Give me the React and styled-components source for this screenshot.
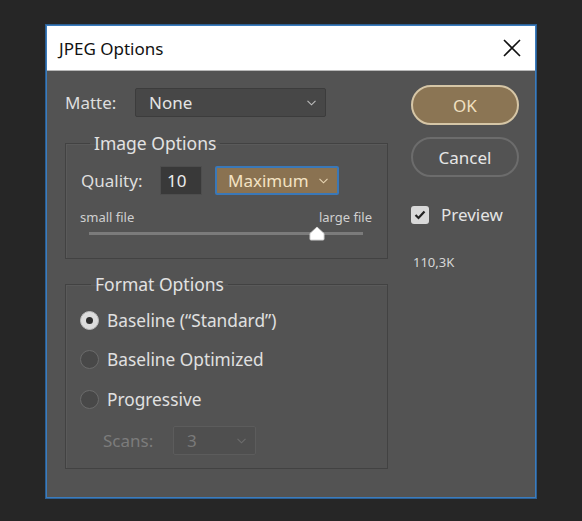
import React from "react";
import styled, { createGlobalStyle, css } from "styled-components";

const GlobalStyle = createGlobalStyle`
  html, body {
    margin: 0;
    background: #262626;
  }

  body {
    font-family: "Noto Sans", "Open Sans", sans-serif;
    color: #dedede;
  }
`;

const Page = styled.div`
  width: 582px;
  height: 521px;
  padding: 25px 0 0 46px;
  box-sizing: border-box;
`;

const Dialog = styled.div`
  width: 490px;
  height: 473px;
  box-sizing: border-box;
  border: 1px solid #3b7cbd;
  background: #535353;
  display: flex;
  flex-direction: column;
  box-shadow: 0 0 0 1px #2c5f93;
`;

const TitleBar = styled.div`
  height: 44px;
  flex-shrink: 0;
  background: #ffffff;
  border-bottom: 1px solid #b8b8b8;
  display: flex;
  align-items: center;
  justify-content: space-between;
  padding: 0 12px 0 12px;
`;

const Title = styled.h1`
  margin: 0;
  font-size: 17px;
  font-weight: 400;
  color: #111;
`;

const CloseButton = styled.button`
  width: 22px;
  height: 22px;
  padding: 0;
  border: 0;
  background: transparent;
  display: flex;
  align-items: center;
  justify-content: center;
  cursor: pointer;
`;

const Body = styled.div`
  display: flex;
  padding-left: 18px;
`;

const LeftCol = styled.div`
  width: 323px;
  margin-top: 17px;
  display: flex;
  flex-direction: column;
`;

const RightCol = styled.div`
  width: 108px;
  margin-left: 23px;
  margin-top: 14px;
  display: flex;
  flex-direction: column;
`;

const Row = styled.div`
  display: flex;
  align-items: center;
  height: ${(p) => p.$h || 29}px;
  padding-left: ${(p) => p.$indent || 0}px;
`;

const Label = styled.span`
  font-size: 17px;
  color: ${(p) => (p.$disabled ? "#7c7c7c" : "#dedede")};
  width: ${(p) => (p.$w ? `${p.$w}px` : "auto")};
  flex-shrink: 0;
`;

const Select = styled.div`
  box-sizing: border-box;
  width: ${(p) => p.$w}px;
  height: 29px;
  border-radius: 2px;
  display: flex;
  align-items: center;
  justify-content: space-between;
  padding: 0 9px 0 13px;
  font-size: 17px;
  background: #474747;
  border: 1px solid #3c3c3c;
  color: #e4e4e4;

  ${(p) =>
    p.$accent &&
    css`
      background: #8a7251;
      border: 2px solid #3a78b8;
      color: #f3e2c3;
      padding-left: 11px;
    `}

  ${(p) =>
    p.$disabled &&
    css`
      background: #4f4f4f;
      border: 1px solid #5c5c5c;
      color: #7a7a7a;
    `}
`;

const NumberBox = styled.div`
  box-sizing: border-box;
  width: 42px;
  height: 29px;
  margin: 0 13px 0 0;
  background: #393939;
  border: 1px solid #4d4d4d;
  display: flex;
  align-items: center;
  padding-left: 6px;
  font-size: 17px;
  color: #ececec;
`;

const Group = styled.fieldset`
  margin: ${(p) => p.$top}px 0 0 0;
  padding: 0 15px ${(p) => p.$bottom}px 14px;
  border: 1px solid #424242;
  box-shadow: inset 1px 1px 0 #5a5a5a;
  min-width: 0;
`;

const Legend = styled.legend`
  margin-left: ${(p) => p.$offset || 10}px;
  padding: 0 4px;
  font-size: 17.5px;
  line-height: 22px;
  color: #e2e2e2;
`;

const FileLabels = styled.div`
  display: flex;
  justify-content: space-between;
  font-size: 13px;
  line-height: 16px;
  color: #d0d0d0;
  margin-top: 14px;
`;

const Slider = styled.div`
  position: relative;
  height: 16px;
  margin: 0 9px 0 9px;
`;

const Track = styled.div`
  position: absolute;
  left: 0;
  right: 0;
  top: 7px;
  height: 3px;
  background: #7b7b7b;
`;

const Thumb = styled.svg`
  position: absolute;
  top: 1px;
  transform: translateX(-50%);
`;

const RadioRow = styled.label`
  display: flex;
  align-items: center;
  height: 24px;
  margin-top: ${(p) => p.$top}px;
  font-size: 17.3px;
  color: #e0e0e0;
  gap: 8px;
`;

const RadioDot = styled.span`
  box-sizing: border-box;
  width: 19px;
  height: 19px;
  border-radius: 50%;
  display: flex;
  align-items: center;
  justify-content: center;
  background: ${(p) => (p.$on ? "#dcdcdc" : "#484848")};
  border: 1px solid ${(p) => (p.$on ? "#bdbdbd" : "#6b6b6b")};

  &::after {
    content: "";
    width: 7px;
    height: 7px;
    border-radius: 50%;
    background: #2e2e2e;
    display: ${(p) => (p.$on ? "block" : "none")};
  }
`;

const Button = styled.button`
  box-sizing: border-box;
  width: 108px;
  height: 40px;
  border-radius: 20px;
  margin-top: ${(p) => p.$top || 0}px;
  font-family: inherit;
  font-size: 17px;
  cursor: pointer;
  background: ${(p) => (p.$primary ? "#8b7554" : "transparent")};
  border: 2px solid ${(p) => (p.$primary ? "#d6c6a6" : "#6c6c6c")};
  color: ${(p) => (p.$primary ? "#f1e0c1" : "#e6e6e6")};
`;

const CheckRow = styled.label`
  display: flex;
  align-items: center;
  gap: 12px;
  margin-top: 26px;
  font-size: 17px;
  color: #e4e4e4;
`;

const CheckBox = styled.span`
  width: 18px;
  height: 18px;
  border-radius: 3px;
  background: #d9d9d9;
  display: flex;
  align-items: center;
  justify-content: center;
`;

const SizeInfo = styled.div`
  margin-top: 27px;
  padding-left: 2px;
  font-size: 13px;
  color: #d6d6d6;
`;

const Chevron = ({ color = "#bdbdbd" }) => (
  <svg width="9" height="6" viewBox="0 0 9 6">
    <path d="M0.5 0.8 L4.5 4.8 L8.5 0.8" fill="none" stroke={color} strokeWidth="1.1" />
  </svg>
);

const quality = 10;

const App = () => {
  return (
    <Page>
      <GlobalStyle />
      <Dialog>
        <TitleBar>
          <Title>JPEG Options</Title>
          <CloseButton aria-label="Close">
            <svg width="18" height="18" viewBox="0 0 18 18">
              <path d="M1 1 L17 17 M17 1 L1 17" stroke="#111" strokeWidth="1.6" />
            </svg>
          </CloseButton>
        </TitleBar>

        <Body>
          <LeftCol>
            <Row>
              <Label $w={70}>Matte:</Label>
              <Select $w={191}>
                None
                <Chevron />
              </Select>
            </Row>

            <Group $top={15} $bottom={17}>
              <Legend>Image Options</Legend>
              <Row $indent={1} style={{ marginTop: 12 }}>
                <Label $w={79}>Quality:</Label>
                <NumberBox>10</NumberBox>
                <Select $w={124} $accent>
                  Maximum
                  <Chevron color="#e8d6b4" />
                </Select>
              </Row>
              <FileLabels>
                <span>small file</span>
                <span>large file</span>
              </FileLabels>
              <Slider>
                <Track />
                <Thumb
                  width="16"
                  height="15"
                  viewBox="0 0 16 15"
                  style={{ left: `${(quality / 12) * 100}%` }}
                >
                  <path
                    d="M8 1 L15 7.5 L15 13 Q15 14 14 14 L2 14 Q1 14 1 13 L1 7.5 Z"
                    fill="#ffffff"
                    stroke="#d0d0d0"
                    strokeWidth="1"
                  />
                </Thumb>
              </Slider>
            </Group>

            <Group $top={14} $bottom={13}>
              <Legend $offset={11}>Format Options</Legend>
              <RadioRow $top={13}>
                <RadioDot $on />
                Baseline (“Standard”)
              </RadioRow>
              <RadioRow $top={15}>
                <RadioDot />
                Baseline Optimized
              </RadioRow>
              <RadioRow $top={16}>
                <RadioDot />
                Progressive
              </RadioRow>
              <Row $indent={23} style={{ marginTop: 15 }}>
                <Label $w={70} $disabled>
                  Scans:
                </Label>
                <Select $w={83} $disabled>
                  3
                  <Chevron color="#6c6c6c" />
                </Select>
              </Row>
            </Group>
          </LeftCol>

          <RightCol>
            <Button $primary>OK</Button>
            <Button $top={12}>Cancel</Button>
            <CheckRow>
              <CheckBox>
                <svg width="12" height="10" viewBox="0 0 12 10">
                  <path
                    d="M1.5 5 L4.5 8 L10.5 1.5"
                    fill="none"
                    stroke="#222"
                    strokeWidth="2.2"
                  />
                </svg>
              </CheckBox>
              Preview
            </CheckRow>
            <SizeInfo>110,3K</SizeInfo>
          </RightCol>
        </Body>
      </Dialog>
    </Page>
  );
};

export default App;
